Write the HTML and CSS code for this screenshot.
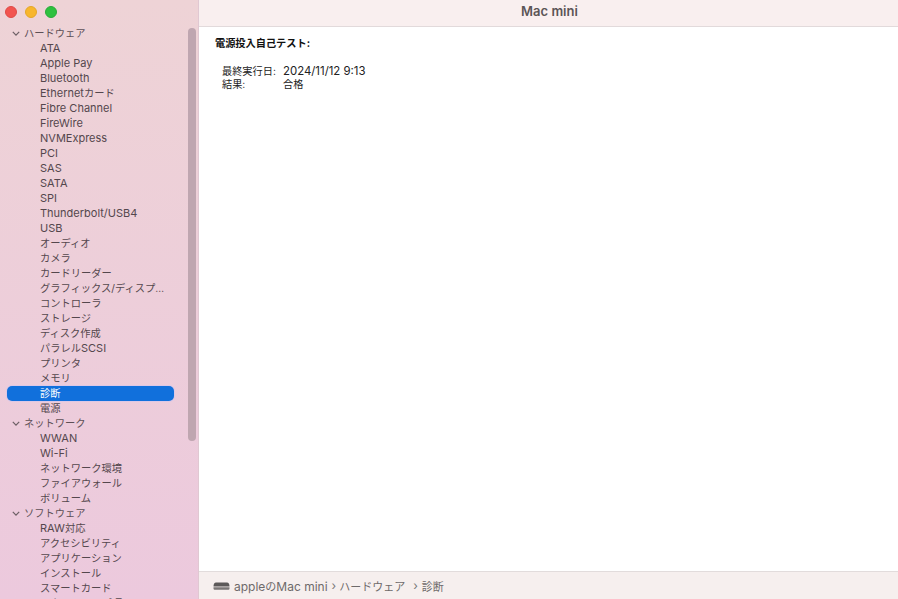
FILE: index.html
```html
<!DOCTYPE html>
<html lang="ja">
<head>
<meta charset="utf-8">
<title>Mac mini</title>
<link rel="stylesheet" href="styles.css">
</head>
<body>
<div class="window">
  <aside class="sidebar">
    <div class="lights">
      <span class="light red"></span>
      <span class="light yellow"></span>
      <span class="light green"></span>
    </div>
    <div class="scroll-area">
      <ul class="tree">
        <li class="group ja"><svg class="chev" viewBox="0 0 10 6"><path d="M1 1l4 4 4-4"/></svg>ハードウェア</li>
        <li>ATA</li>
        <li>Apple Pay</li>
        <li>Bluetooth</li>
        <li>Ethernet<span class="ja">カード</span></li>
        <li>Fibre Channel</li>
        <li>FireWire</li>
        <li>NVMExpress</li>
        <li>PCI</li>
        <li>SAS</li>
        <li>SATA</li>
        <li>SPI</li>
        <li>Thunderbolt/USB4</li>
        <li>USB</li>
        <li class="ja">オーディオ</li>
        <li class="ja">カメラ</li>
        <li class="ja">カードリーダー</li>
        <li class="ja">グラフィックス/ディスプ…</li>
        <li class="ja">コントローラ</li>
        <li class="ja">ストレージ</li>
        <li class="ja">ディスク作成</li>
        <li><span class="ja">パラレル</span>SCSI</li>
        <li class="ja">プリンタ</li>
        <li class="ja">メモリ</li>
        <li class="selected ja">診断</li>
        <li class="ja">電源</li>
        <li class="group ja"><svg class="chev" viewBox="0 0 10 6"><path d="M1 1l4 4 4-4"/></svg>ネットワーク</li>
        <li>WWAN</li>
        <li>Wi-Fi</li>
        <li class="ja">ネットワーク環境</li>
        <li class="ja">ファイアウォール</li>
        <li class="ja">ボリューム</li>
        <li class="group ja"><svg class="chev" viewBox="0 0 10 6"><path d="M1 1l4 4 4-4"/></svg>ソフトウェア</li>
        <li>RAW<span class="ja">対応</span></li>
        <li class="ja">アクセシビリティ</li>
        <li class="ja">アプリケーション</li>
        <li class="ja">インストール</li>
        <li class="ja">スマートカード</li>
        <li class="ja">スタートアップ項目</li>
      </ul>
      <div class="scrollbar"></div>
    </div>
  </aside>
  <main class="main">
    <header class="titlebar">Mac mini</header>
    <section class="content">
      <h1 class="heading">電源投入自己テスト:</h1>
      <dl class="info">
        <dt class="ja">最終実行日:</dt><dd>2024/11/12 9:13</dd>
        <dt class="ja">結果:</dt><dd class="ja">合格</dd>
      </dl>
    </section>
    <footer class="pathbar">
      <svg class="mini" viewBox="0 0 16 8"><path class="mini-top" d="M2.5 .5h11C15 .5 16 2 16 4.500H0C0 2 1 .5 2.500 .5z"/><path class="mini-base" d="M0 5.200h16V6.500C16 7.300 15.500 7.800 14.500 7.800h-13C.5 7.800 0 7.300 0 6.500z"/></svg>
      <span class="crumb">apple<span class="crumb-ja">の</span>Mac mini</span><span class="sep">›</span><span class="crumb-ja">ハードウェア</span><span class="sep wide">›</span><span class="crumb-ja">診断</span>
    </footer>
  </main>
</div>
</body>
</html>
```
FILE: styles.css
```css
* { box-sizing: border-box; }
html, body { margin: 0; height: 100%; overflow: hidden; }
body { font-family: Inter, "Noto Sans CJK JP", sans-serif; font-size: 11px; background: #fff; }
.window { display: flex; width: 898px; height: 599px; }
.ja { font-size: 10.250px; }

.sidebar {
  width: 199px; flex: none; height: 599px; overflow: hidden;
  background: linear-gradient(180deg, #eed3d6 0%, #ecc9dd 100%);
  border-right: 1px solid #e0c8d2;
  display: flex; flex-direction: column;
}
.lights { display: flex; gap: 8px; height: 26px; padding: 6px 0 0 5px; flex: none; }
.light { width: 12px; height: 12px; border-radius: 50%; }
.red { background: #f2544f; border: 1px solid #df4a46; }
.yellow { background: #f8b62d; border: 1px solid #e4a728; }
.green { background: #2ec13f; border: 1px solid #2aab39; }

.scroll-area { flex: 1; min-height: 0; display: flex; }
.tree {
  list-style: none; margin: 0; padding: 0; width: 174px; flex: none;
  color: #54474d; line-height: 15px;
}
.tree li { height: 15px; padding-left: 33px; margin-left: 7px; white-space: nowrap; }
.tree .group { padding-left: 5px; display: flex; align-items: center; color: #5d5056; }
.chev { width: 8px; height: 5px; fill: none; stroke: #6b5e64; stroke-width: 1.500; margin-right: 4px; flex: none; }
.tree .selected { background: #1170dc; color: #fff; border-radius: 5px; box-shadow: 0 0 0 1px #dcc8e6; }
.scrollbar { width: 8px; height: 413px; margin: 2px 0 0 14px; background: #bfa6b0; border-radius: 4px; flex: none; }

.main { flex: 1; display: flex; flex-direction: column; min-width: 0; }
.titlebar {
  height: 27px; flex: none; background: #f9efef; border-bottom: 1px solid #e2dadb;
  text-align: center; font-size: 13px; font-weight: 600; line-height: 23px; color: #5b5556; padding-left: 2px;
}
.content { flex: 1; padding: 9px 16px; color: #222; }
.heading { margin: 0; font-size: 10.200px; font-weight: 700; line-height: 14px; color: #111; }
.info { display: grid; grid-template-columns: 61px auto; margin: 15px 0 0 7px; line-height: 13px; justify-content: start; font-size: 11.400px; }
.info dt, .info dd { margin: 0; }
.info .ja { font-size: 10.200px; }

.pathbar {
  height: 28px; flex: none; background: #f6efee; border-top: 1px solid #e2dcdc;
  display: flex; align-items: center; padding-left: 14px; color: #6e6a6a; font-size: 12px;
}
.crumb-ja { font-size: 11px; }
.mini { width: 17px; height: 8px; margin-right: 4px; flex: none; }
.mini-top { fill: #5c5959; }
.mini-base { fill: #7a7676; }
.sep { margin: 0 3px 0 4px; color: #777; }
.sep.wide { margin: 0 4px 0 8px; }
```
